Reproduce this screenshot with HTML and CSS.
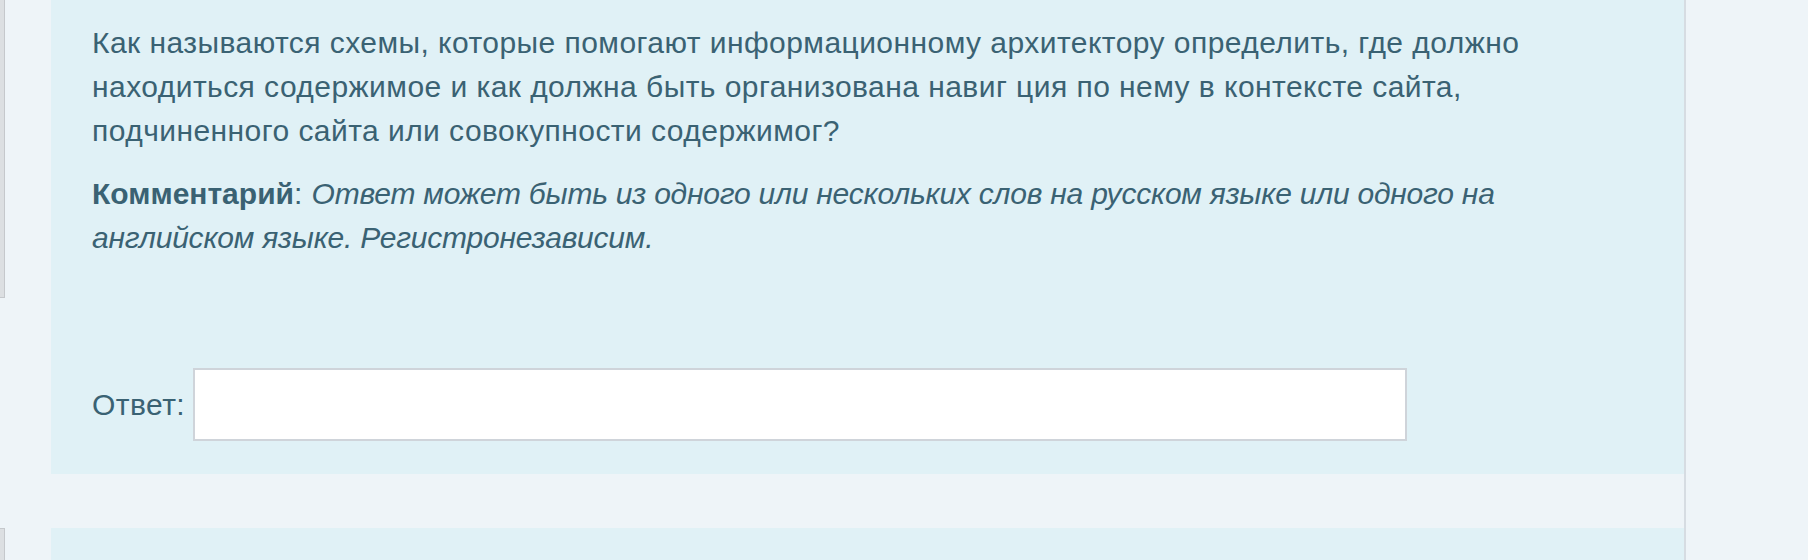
FILE: index.html
```html
<!DOCTYPE html>
<html lang="ru">
<head>
<meta charset="utf-8">
<title>Вопрос</title>
<link rel="stylesheet" href="styles.css">
</head>
<body>
<div class="layout">
  <main class="main">
    <div class="questions">
      <div class="que">
        <div class="info"></div>
        <div class="content">
          <div class="formulation">
            <p class="qtext">Как называются схемы, которые помогают информационному архитектору определить, где должно находиться содержимое и как должна быть организована навиг ция по нему в контексте сайта, подчиненного сайта или совокупности содержимог?</p>
            <p class="comment"><strong class="comment-title">Комментарий</strong>: <em class="comment-text">Ответ может быть из одного или нескольких слов на русском языке или одного на английском языке. Регистронезависим.</em></p>
            <div class="answer">
              <label class="answer-label" for="ans1">Ответ:</label>
              <input class="answer-input" id="ans1" type="text">
            </div>
          </div>
        </div>
      </div>
      <div class="que">
        <div class="info"></div>
        <div class="content">
          <div class="formulation formulation-next"></div>
        </div>
      </div>
    </div>
  </main>
  <aside class="aside"></aside>
</div>
</body>
</html>
```
FILE: styles.css
```css
html, body {
  margin: 0;
  padding: 0;
}
body {
  background: #eef4f8;
  font-family: "Liberation Sans", Arial, Helvetica, sans-serif;
  overflow: hidden;
  height: 560px;
}
.layout {
  display: flex;
  height: 560px;
}
.main {
  width: 1684px;
  flex: none;
  border-right: 2px solid #d6dce2;
  overflow: hidden;
}
.aside {
  flex: 1;
}
.questions {
  margin-top: -40px;
  display: flex;
  flex-direction: column;
  gap: 54px;
}
.que {
  display: flex;
  align-items: flex-start;
}
.info {
  flex: none;
  width: 120px;
  height: 338px;
  margin-left: -115px;
  box-sizing: border-box;
  background: #dcdfe2;
  border: 1px solid #c5c8cc;
}
.content {
  flex: 1;
  margin-left: 46px;
}
.formulation {
  background: #e0f1f6;
  color: #3a6273;
  font-size: 30px;
  line-height: 44px;
  letter-spacing: 0.45px;
  padding: 61px 41px 33px 41px;
}
.formulation-next {
  height: 300px;
  padding: 0;
}
.qtext {
  margin: 0;
}
.comment {
  margin: 19px 0 0 0;
}
.comment-title {
  font-weight: bold;
  letter-spacing: 0;
}
.comment-text {
  font-style: italic;
  letter-spacing: -0.22px;
}
.answer {
  margin-top: 108px;
  display: flex;
  align-items: center;
  gap: 8px;
}
.answer-label {
  line-height: 40px;
}
.answer-input {
  width: 1214px;
  height: 73px;
  box-sizing: border-box;
  border: 2px solid #cfd4da;
  background: #ffffff;
  margin: 0;
  padding: 0 10px;
  font: inherit;
  outline: none;
}
```
